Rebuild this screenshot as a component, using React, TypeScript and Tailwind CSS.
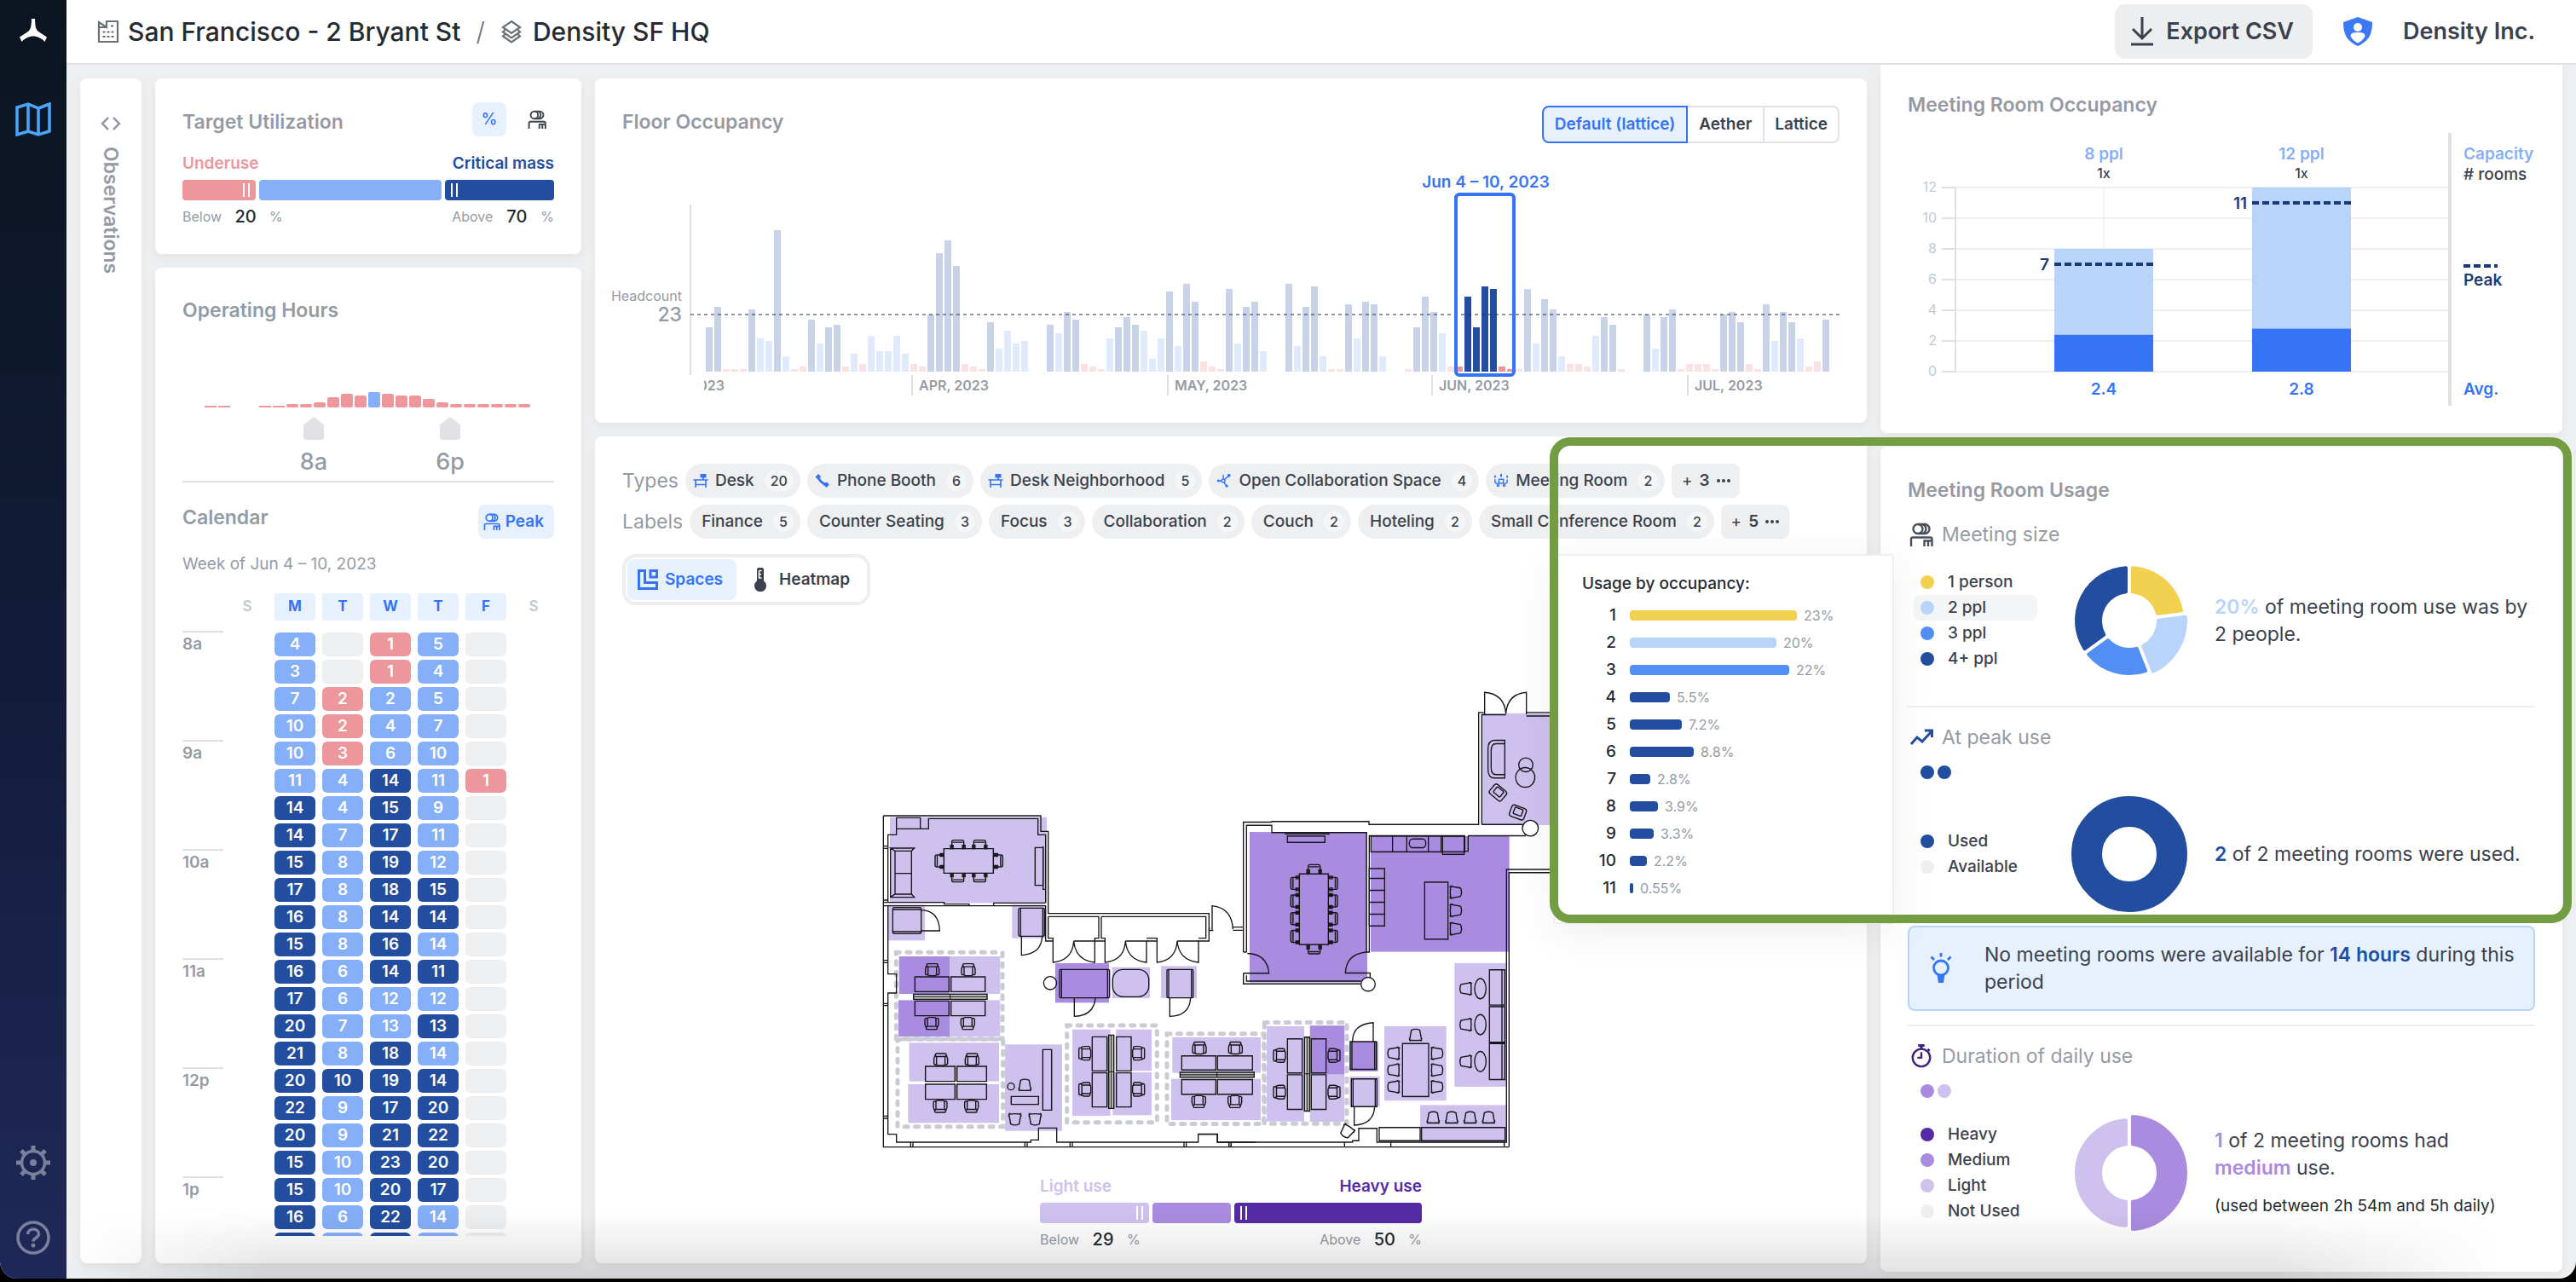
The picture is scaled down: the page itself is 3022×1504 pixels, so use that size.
import React from "react";

/* ---------- icons ---------- */

type IconProps = { className?: string };

const LogoIcon = ({ className }: IconProps) => (
  <svg viewBox="0 0 34 28" className={className} fill="currentColor" aria-hidden="true">
    <path d="M15 0h4c.2 9 1 12.500 4 15l10 6.500-2.500 5.500C27 23 22 20.500 17 20.500S7 23 3.500 27L1 21.500 11 15c3-2.500 3.800-6 4-15z" />
  </svg>
);

const MapIcon = ({ className }: IconProps) => (
  <svg viewBox="0 0 42 40" className={className} fill="none" stroke="currentColor" strokeWidth="3.500" aria-hidden="true">
    <path d="M2 6l13-4 12 5 13-5v32l-13 4-12-4-13 4zM15 2v32M27 7v31" />
  </svg>
);

const GearIcon = ({ className }: IconProps) => (
  <svg viewBox="0 0 40 40" className={className} fill="none" stroke="currentColor" aria-hidden="true">
    <circle cx="20" cy="20" r="13.500" strokeWidth="3.500" />
    <circle cx="20" cy="20" r="4" fill="currentColor" stroke="none" />
    {[0, 45, 90, 135, 180, 225, 270, 315].map((a) => (
      <path key={a} d="M20 0v6" strokeWidth="5" transform={`rotate(${a} 20 20)`} />
    ))}
  </svg>
);

const HelpIcon = ({ className }: IconProps) => (
  <svg viewBox="0 0 40 40" className={className} fill="none" stroke="currentColor" strokeWidth="3.500" aria-hidden="true">
    <circle cx="20" cy="20" r="18" />
    <path d="M13.500 16c0-8 13-8 13-.500 0 5-6.500 4.500-6.500 9" />
    <circle cx="20" cy="29" r="2.500" fill="currentColor" stroke="none" />
  </svg>
);

const BuildingIcon = ({ className }: IconProps) => (
  <svg viewBox="0 0 26 28" className={className} fill="none" stroke="currentColor" strokeWidth="2.200" aria-hidden="true">
    <path d="M2 26V3l9 6V2h13v24zM2 9h9" />
    <path d="M6.500 14.500h3M11.500 14.500h3M16.500 14.500h3M6.500 20h3M11.500 20h3M16.500 20h3M16 7.500h3" />
  </svg>
);

const LayersIcon = ({ className }: IconProps) => (
  <svg viewBox="0 0 26 28" className={className} fill="none" stroke="currentColor" strokeWidth="2.200" aria-hidden="true">
    <path d="M13 2l10 7-10 7L3 9zM5.500 12L3 14.500l10 7 10-7-2.500-2.500M5.500 17L3 19.500l10 7 10-7-2.500-2.500" />
  </svg>
);

const DownloadIcon = ({ className }: IconProps) => (
  <svg viewBox="0 0 28 36" className={className} fill="none" stroke="currentColor" strokeWidth="3" aria-hidden="true">
    <path d="M14 1v25M3 15l11 11 11-11M1 33h26" />
  </svg>
);

const ShieldIcon = ({ className }: IconProps) => (
  <svg viewBox="0 0 34 34" className={className} aria-hidden="true">
    <path d="M17 0l17 6c0 7-1 13-4 18-3 4-8 8-13 10-5-2-10-6-13-10C1 19 0 13 0 6z" fill="#3b78f6" />
    <circle cx="17" cy="12" r="5" fill="#fff" />
    <path d="M8.500 22.500c0-4 4-4.500 8.500-4.500s8.500.500 8.500 4.500c-2 4-5.500 6.500-8.500 8-3-1.500-6.500-4-8.500-8z" fill="#fff" />
  </svg>
);

const PeopleIcon = ({ className }: IconProps) => (
  <svg viewBox="0 0 28 28" className={className} fill="none" stroke="currentColor" strokeWidth="2.400" aria-hidden="true">
    <circle cx="10" cy="7.500" r="5.500" />
    <path d="M14 2a5.500 5.500 0 0 1 0 11M18 2a5.500 5.500 0 0 1 0 11M10 2h8M10 13h8" />
    <path d="M2 28v-8.500q0-2 2-2H24.500q2 0 2 2V28M17.500 28v-6.500H26M22 28v-6" />
  </svg>
);

const DeskIcon = ({ className }: IconProps) => (
  <svg viewBox="0 0 17 16" className={className} fill="none" stroke="currentColor" strokeWidth="1.600" aria-hidden="true">
    <path d="M0 7h17M2.500 7v9M14.500 7v9M2.500 12.500h12M11.500 4v3" />
    <path d="M8 0h7v4.500H8z" fill="currentColor" stroke="none" />
  </svg>
);

const PhoneIcon = ({ className }: IconProps) => (
  <svg viewBox="0 0 14 14" className={className} fill="none" stroke="currentColor" aria-hidden="true">
    <path d="M2.500 2.500q1.500 6.500 9 9" strokeWidth="2.400" />
    <path d="M1 4.500l3-3M9.500 12.500l3-3" strokeWidth="4" />
  </svg>
);

const CollabIcon = ({ className }: IconProps) => (
  <svg viewBox="0 0 18 18" className={className} fill="none" stroke="currentColor" strokeWidth="1.600" aria-hidden="true">
    <circle cx="8" cy="9" r="2.200" />
    <path d="M9.500 7.500L15.500 2M6 9H1M9 11l3 5M8 7V1M13 5l3-4" />
    <circle cx="15.500" cy="2" r="1.300" fill="currentColor" />
    <circle cx="1.500" cy="9" r="1" fill="currentColor" />
    <circle cx="12.500" cy="16" r="1" fill="currentColor" />
  </svg>
);

const MeetingIcon = ({ className }: IconProps) => (
  <svg viewBox="0 0 18 18" className={className} fill="none" stroke="currentColor" strokeWidth="1.600" aria-hidden="true">
    <path d="M9 0v4M1 2v3M17 2v3" strokeWidth="2.200" />
    <path d="M1 7v4l3 2v4M17 7v4l-3 2v4M6 7h6v10M6 7v10M6 12h6" />
  </svg>
);

const SpacesIcon = ({ className }: IconProps) => (
  <svg viewBox="0 0 24 24" className={className} fill="none" stroke="currentColor" strokeWidth="3" aria-hidden="true">
    <path d="M1.500 1.500h7V15.500h14v7h-21zM15 1.500h7.500V9H15z" />
  </svg>
);

const ThermometerIcon = ({ className }: IconProps) => (
  <svg viewBox="0 0 16 28" className={className} aria-hidden="true">
    <path d="M4 2q0-2 2-2h4q2 0 2 2v13.500a7 7 0 1 1-8 0z" fill="currentColor" />
    <path d="M6.500 3.500h3M6.500 3.500V12h3M6.500 7.800h2.500" stroke="#fff" strokeWidth="1.600" fill="none" />
  </svg>
);

const TrendIcon = ({ className }: IconProps) => (
  <svg viewBox="0 0 28 20" className={className} fill="none" stroke="currentColor" strokeWidth="3" aria-hidden="true">
    <path d="M2 18l7-8 6 5L26 3M18 2h8.500v8" />
  </svg>
);

const TimerIcon = ({ className }: IconProps) => (
  <svg viewBox="0 0 26 30" className={className} fill="none" stroke="currentColor" strokeWidth="2.600" aria-hidden="true">
    <circle cx="13" cy="17" r="11" />
    <path d="M13 10v7H8M21 6l2.500 2.500" />
    <path d="M9 1.500h8M13 1v5" strokeWidth="3.500" />
  </svg>
);

const BulbIcon = ({ className }: IconProps) => (
  <svg viewBox="0 0 26 36" className={className} fill="none" stroke="currentColor" strokeWidth="2.800" aria-hidden="true">
    <circle cx="13" cy="17.500" r="8.500" />
    <path d="M13 0v4.500M1.500 4.500L5 8M24.500 4.500L21 8" />
    <path d="M8.500 25h9L16 35h-6z" fill="currentColor" stroke="none" />
  </svg>
);

/* ---------- shared pieces ---------- */

const cardClass = "rounded-lg bg-white shadow-[0_4px_12px_rgba(0,0,0,0.05)]";
const titleClass = "text-[23px] leading-[30px] font-semibold text-[#959ba4]";

type Segment = { grow: number; color: string; handle?: "left" | "right" };

function ThresholdBar(props: {
  id: string;
  low: string;
  high: string;
  lowClass: string;
  highClass: string;
  below: string;
  above: string;
  segments: Segment[];
}) {
  const grip = (
    <span className="mx-[7px] flex h-4 gap-1">
      <span className="w-[2px] bg-white" />
      <span className="w-[2px] bg-white" />
    </span>
  );
  return (
    <div>
      <div className="flex justify-between text-[19px] leading-6 font-semibold">
        <span className={props.lowClass}>{props.low}</span>
        <span className={props.highClass}>{props.high}</span>
      </div>
      <div className="mt-[7px] flex h-6 gap-1">
        {props.segments.map((s, i) => (
          <div
            key={i}
            className={`flex items-center rounded-sm ${s.color} ${s.handle === "right" ? "justify-end" : "justify-start"}`}
            style={{ flex: `${s.grow} 1 0px` }}
          >
            {s.handle ? grip : null}
          </div>
        ))}
      </div>
      <div className="mt-[5px] flex h-7 items-center justify-between text-base text-[#959ba4]">
        <label className="flex items-center">
          Below
          <input
            id={`${props.id}-below`}
            defaultValue={props.below}
            className="mx-1 w-12 bg-transparent text-center text-xl font-medium text-[#252a33]"
          />
          %
        </label>
        <label className="flex items-center">
          Above
          <input
            id={`${props.id}-above`}
            defaultValue={props.above}
            className="mx-1 w-12 bg-transparent text-center text-xl font-medium text-[#252a33]"
          />
          %
        </label>
      </div>
    </div>
  );
}

/* ---------- sidebar and header ---------- */

function Sidebar() {
  return (
    <nav className="flex w-[78px] shrink-0 flex-col items-center bg-linear-to-b from-[#0b1520] via-[#121b38] to-[#1f2959] pt-[22px] pb-7">
      <a href="#home" aria-label="Home" className="text-white">
        <LogoIcon className="h-[28px] w-[34px]" />
      </a>
      <a href="#map" aria-label="Floor map" className="mt-[70px] text-[#4ba5fb]">
        <MapIcon className="h-10 w-[42px]" />
      </a>
      <a href="#settings" aria-label="Settings" className="mt-auto text-[#7a819c]">
        <GearIcon className="h-10 w-10" />
      </a>
      <a href="#help" aria-label="Help" className="mt-12 text-[#7a819c]">
        <HelpIcon className="h-10 w-10" />
      </a>
    </nav>
  );
}

function Header() {
  return (
    <header className="z-20 flex h-[76px] shrink-0 items-center justify-between border-b-2 border-[#e1e2e7] bg-white pr-12 pl-9">
      <nav className="flex items-center text-[30px] font-medium text-[#252a33]">
        <BuildingIcon className="mr-[10px] h-7 w-[26px] text-[#6b6f76]" />
        <a href="#building">San Francisco - 2 Bryant St</a>
        <span className="mx-[18px] font-light text-[#6b6f76]">/</span>
        <LayersIcon className="mr-3 h-7 w-[26px] text-[#6b6f76]" />
        <a href="#floor">Density SF HQ</a>
      </nav>
      <div className="flex items-center text-[27px] font-semibold text-[#3b424d]">
        <button className="flex h-16 items-center gap-[14px] rounded-xl bg-[#edeef0] pr-[22px] pl-[18px]">
          <DownloadIcon className="h-9 w-7" />
          Export CSV
        </button>
        <ShieldIcon className="ml-9 h-[34px] w-[34px]" />
        <span className="ml-9">Density Inc.</span>
      </div>
    </header>
  );
}

function ObservationsPanel() {
  return (
    <button aria-label="Expand observations" className={`${cardClass} flex w-[72px] shrink-0 flex-col items-center pt-[45px] text-[#959ba4]`}>
      <svg viewBox="0 0 24 16" className="h-4 w-6" fill="none" stroke="currentColor" strokeWidth="2.500" aria-hidden="true">
        <path d="M9 1L2 8l7 7M15 1l7 7-7 7" />
      </svg>
      <span className="mt-[19px] text-[23px] font-semibold [writing-mode:vertical-rl]">Observations</span>
    </button>
  );
}

/* ---------- target utilisation, hours, calendar ---------- */

function TargetUtilization() {
  return (
    <section className={`${cardClass} px-8 pt-7 pb-[30px]`}>
      <div className="mb-5 flex h-10 items-start justify-between pr-2">
        <h2 className={`${titleClass} mt-2`}>Target Utilization</h2>
        <div className="flex items-center gap-6">
          <button className="h-10 w-10 rounded-lg bg-[#e7f1fe] text-[19px] font-medium text-[#3474f5]">%</button>
          <button aria-label="People" className="text-[#3b424d]">
            <PeopleIcon className="h-[22px] w-[24px]" />
          </button>
        </div>
      </div>
      <ThresholdBar
        id="utilization"
        low="Underuse"
        high="Critical mass"
        lowClass="text-[#ed979c]"
        highClass="text-[#234e9f]"
        below="20"
        above="70"
        segments={[
          { grow: 86, color: "bg-[#ed979c]", handle: "right" },
          { grow: 214, color: "bg-[#85aff8]" },
          { grow: 128, color: "bg-[#234e9f]", handle: "left" },
        ]}
      />
    </section>
  );
}

const hourBars = [2, 2, 0, 0, 2, 2, 4, 4, 6, 12, 16, 14, 18, 16, 14, 14, 10, 6, 4, 4, 4, 4, 4, 4];

function OperatingHours() {
  return (
    <svg viewBox="0 0 436 185" className="block w-full" role="img" aria-label="Operating hours">
      {hourBars.map((h, i) => (
        <rect key={i} x={26 + i * 16} y={99 - h} width="14" height={h} rx={h > 2 ? 2 : 0} fill={i === 12 ? "#85aff8" : "#ed979c"} />
      ))}
      {[
        { x: 154, t: "8a" },
        { x: 314, t: "6p" },
      ].map((m) => (
        <g key={m.t}>
          <path d={`M${m.x} 110l12 9v15q0 3-3 3h-18q-3 0-3-3v-15z`} fill="#e1e2e6" />
          <text x={m.x} y="172" textAnchor="middle" className="fill-[#959ba4] text-[27px] font-medium">
            {m.t}
          </text>
        </g>
      ))}
    </svg>
  );
}

const calendarRows = [
  "4b - 1p 5b -",
  "3b - 1p 4b -",
  "7b 2p 2b 5b -",
  "10b 2p 4b 7b -",
  "10b 3p 6b 10b -",
  "11b 4b 14d 11b 1p",
  "14d 4b 15d 9b -",
  "14d 7b 17d 11b -",
  "15d 8b 19d 12b -",
  "17d 8b 18d 15d -",
  "16d 8b 14d 14d -",
  "15d 8b 16d 14b -",
  "16d 6b 14d 11d -",
  "17d 6b 12b 12b -",
  "20d 7b 13b 13d -",
  "21d 8b 18d 14b -",
  "20d 10d 19d 14d -",
  "22d 9b 17d 20d -",
  "20d 9b 21d 22d -",
  "15d 10b 23d 20d -",
  "15d 10b 20d 17d -",
  "16d 6b 22d 14b -",
  "d b d b -",
];
const hourLabels = ["8a", "9a", "10a", "11a", "12p", "1p"];
const levelClass: Record<string, string> = {
  b: "bg-[#85aff8]",
  p: "bg-[#ed979c]",
  d: "bg-[#234e9f]",
  "-": "bg-[#eeeff1]",
};

function Calendar() {
  return (
    <>
      <div className="mt-[26px] flex items-start justify-between">
        <h2 className={titleClass}>Calendar</h2>
        <button className="flex h-10 items-center gap-[6px] rounded-lg bg-[#e7f1fe] pr-3 pl-[6px] text-[19px] font-semibold text-[#3474f5]">
          <PeopleIcon className="h-5 w-5" />
          Peak
        </button>
      </div>
      <p className="mt-[18px] text-[19px] leading-6 text-[#959ba4]">Week of Jun 4 – 10, 2023</p>
      <div className="-mx-2 mt-[18px] min-h-0 flex-1 overflow-hidden">
        <table className="w-full table-fixed border-separate border-spacing-x-2 border-spacing-y-1 text-center">
          <thead>
            <tr className="text-[17px] font-bold">
              <th className="w-11 p-0" />
              {["S", "M", "T", "W", "T", "F", "S"].map((d, i) => (
                <th key={i} className="p-0 pb-[10px]">
                  <span
                    className={`flex h-8 items-center justify-center rounded-sm ${
                      i === 0 || i === 6 ? "font-semibold text-[#c5c9d0]" : "bg-[#e7f1fe] text-[#3474f5]"
                    }`}
                  >
                    {d}
                  </span>
                </th>
              ))}
            </tr>
          </thead>
          <tbody>
            {calendarRows.map((row, r) => (
              <tr key={r}>
                <th className="p-0">
                  {r % 4 === 0 && hourLabels[r / 4] ? (
                    <span className="flex h-7 w-12 items-center text-[19px] font-semibold text-[#959ba4] shadow-[0_-2px_0_#dfe1e5]">
                      {hourLabels[r / 4]}
                    </span>
                  ) : null}
                </th>
                <td className="p-0" />
                {row.split(" ").map((c, i) => (
                  <td key={i} className="p-0">
                    <span
                      className={`flex h-7 items-center justify-center rounded-md text-[19px] font-semibold text-white ${levelClass[c.slice(-1)]}`}
                    >
                      {c.slice(0, -1)}
                    </span>
                  </td>
                ))}
                <td className="p-0" />
              </tr>
            ))}
          </tbody>
        </table>
      </div>
    </>
  );
}

/* ---------- floor occupancy chart ---------- */

/* One entry per day: bar height, then d = above target, l = light, p = underused. */
const dayBars = (
  "52d 76d 3p 3p 3p 73d 39l 36l 166d 18l 3p 6p 61d 33l 52d 55d 6p 21l 9p 42l 24l 24l 42l 21l 9p 6p 67d 139d 154d 124d " +
  "9p 6p 3p 58d 27l 48l 33l 36l 0l 0l 55d 45l 70d 61d 9p 6p 3p 39l 52d 64d 55d 48l 15l 39l 94d 30l 103d 82d 12p 6p 3p " +
  "97d 33l 76d 82d 24l 0l 0l 103d 30l 76d 100d 18l 3p 3p 79d 39l 82d 79d 18l 0l 0l 3p 52d 88d 70d 45l 6p 6p 88d 52d " +
  "100d 97d 6p 3p 3p 97d 33l 85d 73d 18l 9p 9p 6p 42l 64d 55d 3p 0l 0l 67d 27l 64d 73d 3p 9p 9p 9p 3p 67d 70d 58d 9p 3p " +
  "79d 36l 70d 58d 39l 6p 12p 61d"
).split(" ");

function FloorOccupancy() {
  const fill = (kind: string, i: number) => {
    const selected = i >= 88 && i <= 94;
    if (kind === "d") return selected ? "#234e9f" : "#c8d3e7";
    if (kind === "p") return selected ? "#ed979c" : "#fae1e3";
    return "#dfebfd";
  };
  return (
    <section className={`${cardClass} px-4 pt-8 pb-4`}>
      <div className="flex h-11 items-start justify-between px-4">
        <h2 className={`${titleClass} mt-1`}>Floor Occupancy</h2>
        <div className="flex h-11 text-[19px] font-semibold text-[#3b424d]">
          <button className="rounded-l-lg border-2 border-[#3474f5] bg-[#e7f1fe] px-[13px] text-[#3474f5]">Default (lattice)</button>
          <button className="border-y-2 border-[#e1e2e7] px-[13px]">Aether</button>
          <button className="rounded-r-lg border-2 border-[#e1e2e7] px-3">Lattice</button>
        </div>
      </div>
      <svg viewBox="0 0 1460 284" className="mt-7 block w-full" role="img" aria-label="Headcount by day">
        <path d="M96 44V244" stroke="#dfe1e5" strokeWidth="2" />
        {dayBars.map((b, i) => {
          const h = Number(b.slice(0, -1));
          return <rect key={i} x={114 + i * 10} y={240 - h} width="8" height={h} fill={fill(b.slice(-1), i)} />;
        })}
        <path d="M96 173H1444" stroke="#1d2f55" strokeOpacity="0.5" strokeWidth="2" strokeDasharray="4 4" />
        <text x="86" y="157" textAnchor="end" className="fill-[#959ba4] text-[16px]">
          Headcount
        </text>
        <text x="86" y="181" textAnchor="end" className="fill-[#959ba4] text-[23px] font-medium">
          23
        </text>
        <svg x="112" y="244" width="60" height="24">
          <text x="24" y="18" textAnchor="end" className="fill-[#959ba4] text-[16px] font-semibold">
            MAR, 2023
          </text>
        </svg>
        {[
          { x: 356, t: "APR, 2023" },
          { x: 656, t: "MAY, 2023" },
          { x: 966, t: "JUN, 2023" },
          { x: 1266, t: "JUL, 2023" },
        ].map((m) => (
          <g key={m.t}>
            <path d={`M${m.x} 244v24`} stroke="#dfe1e5" strokeWidth="2" />
            <text x={m.x + 8} y="262" className="fill-[#959ba4] text-[16px] font-semibold">
              {m.t}
            </text>
          </g>
        ))}
        <rect x="994" y="32" width="68" height="212" rx="4" fill="none" stroke="#3474f5" strokeWidth="4" />
        <text x="1029" y="24" textAnchor="middle" className="fill-[#3474f5] text-[19px] font-semibold">
          Jun 4 – 10, 2023
        </text>
      </svg>
    </section>
  );
}

/* ---------- floor plan ---------- */

const LIGHT = "#cfc1ed";
const MEDIUM = "#a98cdf";

type Box = [number, number, number, number];
type Seat = [number, number, number];

const Boxes = ({ items, fill = "none", stroke }: { items: Box[]; fill?: string; stroke?: string }) => (
  <>
    {items.map(([x1, y1, x2, y2], i) => (
      <rect key={i} x={x1} y={y1} width={x2 - x1} height={y2 - y1} fill={fill} stroke={stroke} vectorEffect="non-scaling-stroke" />
    ))}
  </>
);

const deskChair = "M-6.500-5.500q0-1.500 1.500-1.500H5q1.500 0 1.500 1.500T5-3.500H-5q-1.500 0-1.500-2zM-5-3.500H5V5q0 2-2 2h-6q-2 0-2-2zM-5-4h-2l-1 3v6l1 1h2M5-4h2l1 3v6l-1 1H5";
const diningChair = "M-7 5v-8q0-2 2-2H5q2 0 2 2v8M-6-2.500H6M-8.500 1h3v4h-3zM5.500 1h3v4h-3z";
const loungeChair = "M-5-6q5-2.500 10 0l2 11.500q-7 1-14 0zM-7.500 3l1.500 4M7.500 3L6 7";
const armchair = "M-6-7h12q3 0 3 3v8q0 3-3 3H-6q-3 0-3-3v-8q0-3 3-3zM-4-5h8q1 0 1 1v6q0 1-1 1h-8q-1 0-1-1v-6q0-1 1-1z";

const Seats = ({ shape, items }: { shape: string; items: Seat[] }) => (
  <>
    {items.map(([x, y, r], i) => (
      <path key={i} d={shape} transform={`translate(${x} ${y}) rotate(${r})`} />
    ))}
  </>
);

/* West and east wings use their own drawing units; these map seats to plan units. */
const west = (list: Seat[]): Seat[] => list.map(([x, y, r]) => [1000 + x / 3, 920 + y / 3, r]);
const east = (list: Seat[]): Seat[] => list.map(([x, y, r]) => [1420 + x / 3, 790 + y / 2.7034, r]);

function FloorPlan() {
  return (
    <svg viewBox="1030 806 828 544" className="block w-full max-w-[828px]" fill="none" stroke="#15151a" strokeWidth="1.400" role="img" aria-label="Floor plan">
      <g transform="translate(1000 920) scale(0.33333)" stroke="none">
        <Boxes
          fill={LIGHT}
          items={[
            [132, 116, 684, 418], [124, 424, 255, 550], [562, 424, 680, 542], [342, 606, 520, 738], [342, 760, 520, 888],
            [200, 910, 516, 1046], [196, 1056, 516, 1192], [537, 916, 738, 1220], [914, 644, 1047, 753], [1086, 640, 1212, 753],
            [774, 863, 908, 1167], [928, 863, 1053, 1009], [916, 1014, 1053, 1165],
          ]}
        />
        <Boxes fill={MEDIUM} items={[[164, 606, 342, 738], [162, 760, 342, 888], [714, 630, 903, 769]]} />
      </g>
      <g transform="translate(1420 790) scale(0.33333 0.3699)" stroke="none">
        <Boxes
          fill={LIGHT}
          items={[
            [955, 127, 1310, 481], [859, 919, 1043, 1311], [612, 1119, 830, 1355], [738, 1369, 1043, 1490], [490, 1278, 596, 1373],
            [198, 1119, 330, 1421], [350, 1272, 472, 1422], [-134, 1154, 177, 1267], [-138, 1286, 177, 1417],
          ]}
        />
        <Boxes fill={MEDIUM} items={[[138, 503, 552, 980], [564, 516, 1052, 883], [490, 1168, 590, 1262], [350, 1117, 472, 1272]]} />
      </g>
      <g stroke="#c9ccd5" strokeWidth="5" strokeDasharray="4 8.500" strokeLinecap="round">
        <g transform="translate(1000 920) scale(0.33333)">
          <Boxes items={[[154, 592, 528, 896], [159, 898, 530, 1205], [755, 849, 1072, 1190]]} />
        </g>
        <g transform="translate(1420 790) scale(0.33333 0.3699)">
          <Boxes items={[[-153, 1143, 188, 1429], [190, 1107, 480, 1428]]} />
        </g>
      </g>

      {/* west wing */}
      <g transform="translate(1000 920) scale(0.33333)">
        <g strokeWidth="4">
          <path d="M109 111H663V166H689V455H1255V552H1218M109 111V1277H2311" />
          <path d="M125 416V178H155V118H239V157M155 157H268V121H653V178H680V416M109 416H323V422H411V428H497V418H680M109 428H680V552H706M853 552H889M1035 552H1072" />
          <path d="M125 428V668H155V735H125V1232H155V1260H628V1252H655V1210H719V1260H1217V1232H1284V1260H1420" />
          <path d="M205 1260v17M213 1260v17M607 1260v17M615 1260v17M766 1260v17M774 1260v17M1167 1260v17M1175 1260v17M1325 1260v17M1333 1260v17" />
          <path d="M109 218h16M109 226h16M109 408h16M109 620h16M109 628h16M109 772h16M109 779h16M109 1168h16M109 1176h16" />
          <path d="M689 466H867V542H853V552M689 466V542H706V552M876 466H1244V542H1218M876 466V542H889V552M1035 542H1072V552" />
          <path d="M706 552V627Q775 620 779 552Q785 620 853 627V552H779M889 552V627Q957 620 961 552Q967 620 1035 627V552H961M1072 552V627Q1139 620 1143 552Q1149 620 1218 627V552H1143" />
          <path d="M1266 515V428Q1335 435 1339 510M1256 503V515H1270M1339 503H1377M1339 514H1377" />
          <path d="M242 443Q305 445 307 516H242M595 535V602Q665 598 668 535M781 752V817Q850 815 855 752M1117 752V817Q1187 815 1190 752" />
          <path d="M134 225H218L208 235H150zM134 225V398H218L208 387H150L134 398M150 235V387M208 235V387M150 314H208M671 218V370H680" />
          <rect x="142" y="434" width="100" height="92" rx="6" />
          <rect x="585" y="436" width="91" height="99" rx="6" />
          <rect x="729" y="652" width="176" height="100" rx="4" />
          <path d="M736 652V752M898 652V752M1113 652V752M1193 652V752M592 436V535M670 436V535M142 441H242M142 519H242" />
          <rect x="916" y="652" width="127" height="96" rx="36" />
          <rect x="1107" y="652" width="92" height="100" rx="4" />
          <circle cx="696" cy="700" r="23" />
          <circle cx="558" cy="1064" r="12" />
        </g>
        <Boxes
          stroke="#15151a"
          items={[
            [322, 227, 496, 313], [643, 223, 671, 356], [220, 678, 340, 730], [347, 678, 467, 730], [220, 763, 340, 815], [347, 763, 467, 815],
            [257, 993, 361, 1046], [368, 993, 472, 1046], [257, 1056, 361, 1109], [368, 1056, 472, 1109],
            [559, 1099, 655, 1127], [670, 934, 701, 1147], [844, 889, 896, 1009], [844, 1016, 896, 1136], [929, 889, 981, 1009], [929, 1016, 981, 1136],
          ]}
        />
        <Boxes fill="#c4c6c2" stroke="#15151a" items={[[215, 739, 474, 757], [902, 883, 920, 1141]]} />
        <path d="M911 883V1141M902 1012H920M215 748H474M344 739V757" strokeWidth="3" />
      </g>
      <Seats shape={diningChair} items={west([[371, 212, 0], [448, 212, 0], [371, 329, 180], [448, 329, 180], [306, 270, -90], [514, 270, 90]])} />
      <Seats
        shape={deskChair}
        items={west([
          [281, 653, 0], [408, 653, 0], [279, 842, 180], [406, 842, 180], [311, 969, 0], [421, 969, 0], [309, 1134, 180], [419, 1134, 180],
          [818, 947, -90], [818, 1074, -90], [1007, 947, 90], [1007, 1074, 90],
        ])}
      />
      <Seats shape={loungeChair} items={west([[607, 1060, 0], [572, 1178, 180], [643, 1178, 180]])} />

      {/* east wing */}
      <g transform="translate(1420 790) scale(0.33333 0.3699)">
        <g strokeWidth="4">
          <path d="M116 884V472H214L216 470H558V479H944V124H962M127 884V482H216V505H549V884H559V515H896M116 884H127" />
          <path d="M955 479V131H1040M955 479H1100M906 515H1110M1112 124H1310M1112 135H1310" />
          <path d="M965 130V60Q1035 65 1040 128Q1045 65 1112 60V130M262 509H420" />
          <path d="M1310 622H1042V1487H586V1443H522V1482H500V1487H25V1461H-43M1310 632H1051V1502M635 1487v15M65 1487v15M73 1487v15M472 1487v15M1034 1487v15" />
          <path d="M116 951H206Q200 890 130 888M116 951V985H530M127 958V976H530M549 884Q478 890 475 950H562V968" />
          <rect x="565" y="516" width="330" height="50" />
          <path d="M641 516V566M691 516V566M767 516V566M812 516V566M907 516V564H895V516" />
          <rect x="700" y="525" width="58" height="28" rx="12" />
          <rect x="817" y="516" width="76" height="58" />
          <rect x="559" y="619" width="54" height="182" />
          <path d="M559 650H613M559 688H613M559 726H613M559 764H613" />
          <rect x="754" y="662" width="82" height="181" />
          <rect x="313" y="636" width="102" height="224" />
          <rect x="271" y="516" width="132" height="20" />
          <path d="M1036 212H1000Q977 212 977 240V305Q977 332 1000 332H1036zM1034 223H1005Q988 223 988 245V300Q988 321 1005 321H1034" />
          <ellipse cx="1110" cy="290" rx="25" ry="22" />
          <ellipse cx="1108" cy="330" rx="34" ry="31" />
          <ellipse cx="1126" cy="491" rx="28" ry="25" fill="#fff" />
          <ellipse cx="555" cy="986" rx="25" ry="22" fill="#fff" />
          <path d="M982 940H1036V1052H982zM982 1057H1036V1170H982zM982 1174H1036V1288H982zM1026 940V1288" />
          <ellipse cx="950" cy="1000" rx="20" ry="32" />
          <ellipse cx="950" cy="1114" rx="20" ry="32" />
          <ellipse cx="950" cy="1231" rx="20" ry="32" />
          <rect x="676" y="1174" width="92" height="168" />
          <path d="M492 1168H584V1256H492zM498 1168V1256M578 1168V1256M500 1168Q500 1112 573 1108V1168" />
          <path d="M496 1286H586V1374H496zM502 1286V1374M580 1286V1374M506 1374V1433Q575 1430 578 1374" />
          <path d="M594 1440H738V1482H594zM743 1440H1037V1482H743z" />
          <path d="M271 1159H323V1267H271zM271 1273H323V1383H271zM355 1159H407V1267H355zM355 1273H407V1383H355z" />
          <path d="M-101 1213H19V1258H-101zM25 1213H148V1258H25zM-101 1288H19V1335H-101zM25 1288H148V1335H25z" />
        </g>
        <path d="M331 1154H349V1388H331zM-107 1265H154V1281H-107z" fill="#c4c6c2" strokeWidth="4" />
        <path d="M340 1154V1388M331 1270H349M-107 1273H154M23 1265V1281" strokeWidth="3" />
      </g>
      <Seats
        shape={diningChair}
        items={east([
          [298, 666, -90], [298, 722, -90], [298, 778, -90], [298, 834, -90], [432, 666, 90], [432, 722, 90], [432, 778, 90], [432, 834, 90],
          [365, 620, 0], [365, 876, 180],
        ])}
      />
      <Seats
        shape={deskChair}
        items={east([[243, 1212, -90], [243, 1328, -90], [435, 1212, 90], [435, 1328, 90], [-39, 1188, 0], [88, 1188, 0], [-41, 1358, 180], [86, 1358, 180]])}
      />
      <Seats
        shape={loungeChair}
        items={east([
          [862, 694, 90], [862, 752, 90], [862, 810, 90], [900, 1000, -90], [900, 1114, -90], [900, 1231, -90], [722, 1148, 0], [646, 1205, -90],
          [646, 1258, -90], [646, 1311, -90], [796, 1205, 90], [796, 1258, 90], [796, 1311, 90], [784, 1410, 0], [849, 1410, 0], [914, 1410, 0],
          [979, 1410, 0], [481, 1452, 215],
        ])}
      />
      <Seats shape={armchair} items={east([[1012, 378, 40], [1082, 441, 20]])} />
    </svg>
  );
}

const typeChips = [
  { Icon: DeskIcon, label: "Desk", count: 20 },
  { Icon: PhoneIcon, label: "Phone Booth", count: 6 },
  { Icon: DeskIcon, label: "Desk Neighborhood", count: 5 },
  { Icon: CollabIcon, label: "Open Collaboration Space", count: 4 },
  { Icon: MeetingIcon, label: "Meeting Room", count: 2 },
];
const labelChips = [
  { label: "Finance", count: 5 },
  { label: "Counter Seating", count: 3 },
  { label: "Focus", count: 3 },
  { label: "Collaboration", count: 2 },
  { label: "Couch", count: 2 },
  { label: "Hoteling", count: 2 },
  { label: "Small Conference Room", count: 2 },
];

const Count = ({ n }: { n: number }) => (
  <span className="ml-3 flex h-6 min-w-6 items-center justify-center rounded-full bg-[#f5f6f8] px-[7px] text-base font-medium">{n}</span>
);

const MoreButton = ({ n }: { n: number }) => (
  <button className="flex h-10 w-20 items-center justify-center gap-2 rounded-lg bg-[#eeeff1] text-[19px] font-semibold">
    <span className="font-normal">+</span>
    {n}
    <span className="flex gap-[2px]">
      <span className="h-1 w-1 rounded-full bg-[#3b424d]" />
      <span className="h-1 w-1 rounded-full bg-[#3b424d]" />
      <span className="h-1 w-1 rounded-full bg-[#3b424d]" />
    </span>
  </button>
);

function FloorPanel() {
  return (
    <section className={`${cardClass} flex-1 px-8 pt-8 pb-[14px]`}>
      <div className="flex flex-col gap-2 text-[19px] font-medium whitespace-nowrap text-[#3b424d]">
        <div className="flex items-center gap-2">
          <span className="text-[23px] font-normal text-[#959ba4]">Types</span>
          {typeChips.map(({ Icon, label, count }) => (
            <button key={label} className="flex h-10 items-center rounded-full bg-[#eeeff1] pr-2 pl-[9px]">
              <Icon className="mr-2 h-4 w-[18px] text-[#3474f5]" />
              {label}
              <Count n={count} />
            </button>
          ))}
          <MoreButton n={3} />
        </div>
        <div className="flex items-center gap-2">
          <span className="text-[23px] font-normal text-[#959ba4]">Labels</span>
          {labelChips.map(({ label, count }) => (
            <button key={label} className="flex h-10 items-center rounded-full bg-[#eeeff1] pr-2 pl-[14px]">
              {label}
              <Count n={count} />
            </button>
          ))}
          <MoreButton n={5} />
        </div>
      </div>
      <div className="mt-[18px] inline-flex h-[60px] rounded-2xl border-4 border-[#eeeff1] p-[2px] text-[19px] font-semibold">
        <button className="flex h-12 items-center gap-2 rounded-lg bg-[#e7f1fe] px-3 pr-4 text-[#3474f5]">
          <SpacesIcon className="h-6 w-6" />
          Spaces
        </button>
        <button className="flex h-12 items-center gap-[14px] pr-[18px] pl-5 text-[#3b424d]">
          <ThermometerIcon className="h-7 w-4" />
          Heatmap
        </button>
      </div>
      <div className="mt-24 flex justify-center">
        <FloorPlan />
      </div>
      <div className="mx-auto mt-[30px] w-[448px]">
        <ThresholdBar
          id="use"
          low="Light use"
          high="Heavy use"
          lowClass="text-[#cfc1ed]"
          highClass="text-[#552ba5]"
          below="29"
          above="50"
          segments={[
            { grow: 128, color: "bg-[#cfc1ed]", handle: "right" },
            { grow: 92, color: "bg-[#a98cdf]" },
            { grow: 220, color: "bg-[#552ba5]", handle: "left" },
          ]}
        />
      </div>
    </section>
  );
}

/* ---------- meeting rooms ---------- */

function RoomOccupancy() {
  const y = (v: number) => 288 - v * 18;
  const rooms = [
    { x: 172, cap: 8, avg: 2.4, peak: 7 },
    { x: 404, cap: 12, avg: 2.8, peak: 11 },
  ];
  return (
    <section className="rounded-b-lg bg-white px-8 pt-8 pb-7 shadow-[0_4px_12px_rgba(0,0,0,0.05)]">
      <h2 className={titleClass}>Meeting Room Occupancy</h2>
      <svg viewBox="0 0 736 332" className="mt-[10px] block w-full" role="img" aria-label="Meeting room occupancy">
        <path d="M230 72V144" stroke="#f2f3f5" strokeWidth="2" />
        {[0, 2, 4, 6, 8, 10, 12].map((v) => (
          <g key={v}>
            <path d={`M56 ${y(v)}H634`} stroke="#eeeff1" strokeWidth="2" />
            <path d={`M40 ${y(v)}H56`} stroke="#dfe1e5" strokeWidth="2" />
            <text x="34" y={y(v) + 5} textAnchor="end" className="fill-[#c5c9d0] text-[16px]">
              {v}
            </text>
          </g>
        ))}
        <path d="M56 72V288" stroke="#dfe1e5" strokeWidth="2" />
        {rooms.map((r) => (
          <g key={r.cap}>
            <rect x={r.x} y={y(r.cap)} width="116" height={r.cap * 18} fill="#b9d4fa" />
            <rect x={r.x} y={y(r.avg)} width="116" height={r.avg * 18} fill="#3474f5" />
            <path d={`M${r.x} ${y(r.peak)}h116`} stroke="#1c3a77" strokeWidth="4" strokeDasharray="8 4" />
            <text x={r.x - 6} y={y(r.peak) + 7} textAnchor="end" className="fill-[#1c3a77] text-[19px] font-semibold">
              {r.peak}
            </text>
            <text x={r.x + 58} y="39" textAnchor="middle" className="fill-[#85aff8] text-[19px] font-semibold">
              {r.cap} ppl
            </text>
            <text x={r.x + 58} y="61" textAnchor="middle" className="fill-[#3b424d] text-[16px] font-medium">
              1x
            </text>
            <text x={r.x + 58} y="315" textAnchor="middle" className="fill-[#3474f5] text-[19px] font-semibold">
              {r.avg}
            </text>
          </g>
        ))}
        <path d="M636 8V328" stroke="#dfe1e7" strokeWidth="4" />
        <text x="652" y="39" className="fill-[#85aff8] text-[19px] font-semibold">
          Capacity
        </text>
        <text x="652" y="63" className="fill-[#3b424d] text-[19px] font-medium">
          # rooms
        </text>
        <path d="M652 164h40" stroke="#1c3a77" strokeWidth="4" strokeDasharray="8 4" />
        <text x="652" y="187" className="fill-[#1c3a77] text-[19px] font-semibold">
          Peak
        </text>
        <text x="652" y="315" className="fill-[#3474f5] text-[19px] font-semibold">
          Avg.
        </text>
      </svg>
    </section>
  );
}

type Slice = { share: number; color: string; raised?: boolean };

function Donut({ slices }: { slices: Slice[] }) {
  const point = (a: number, r: number) => `${68 + r * Math.sin(a)} ${68 - r * Math.cos(a)}`;
  if (slices.length === 1) {
    return (
      <svg viewBox="0 0 136 136" className="h-[136px] w-[136px] shrink-0" aria-hidden="true">
        <circle cx="68" cy="68" r="50" fill="none" stroke={slices[0].color} strokeWidth="36" />
      </svg>
    );
  }
  let start = 0;
  return (
    <svg viewBox="0 0 136 136" className="h-[136px] w-[136px] shrink-0" aria-hidden="true">
      {slices.map((s, i) => {
        const from = start * 2 * Math.PI;
        start += s.share;
        const to = start * 2 * Math.PI;
        const ro = s.raised ? 66 : 62;
        const ri = 34;
        const go = 4 / ro;
        const gi = 4 / ri;
        const large = s.share > 0.5 ? 1 : 0;
        return (
          <path
            key={i}
            d={`M${point(from + go, ro)}A${ro} ${ro} 0 ${large} 1 ${point(to - go, ro)}L${point(to - gi, ri)}A${ri} ${ri} 0 ${large} 0 ${point(from + gi, ri)}Z`}
            fill={s.color}
            stroke={s.color}
            strokeWidth="4"
            strokeLinejoin="round"
          />
        );
      })}
    </svg>
  );
}

function Legend({ items }: { items: { dot: string; label: string; active?: boolean }[] }) {
  return (
    <ul className="mr-10 ml-[7px] w-[145px] shrink-0 text-[19px] font-medium text-[#3b424d]">
      {items.map((it) => (
        <li key={it.label} className={`flex h-[30px] items-center gap-4 rounded-lg pl-2 ${it.active ? "bg-[#f4f5f7]" : ""}`}>
          <span className={`h-4 w-4 rounded-full ${it.dot}`} />
          {it.label}
        </li>
      ))}
    </ul>
  );
}

const sectionTitle = "flex h-[30px] items-center gap-[10px] pl-[2px] text-[23px] text-[#959ba4]";
const bodyText = "ml-8 text-[23px] leading-8 text-[#3b424d]";

const occupancyRows = [
  { n: 1, pct: "23%", w: 196, color: "bg-[#f3d150]" },
  { n: 2, pct: "20%", w: 172, color: "bg-[#b9d4fa]" },
  { n: 3, pct: "22%", w: 187, color: "bg-[#528ff5]" },
  { n: 4, pct: "5.5%", w: 47, color: "bg-[#234e9f]" },
  { n: 5, pct: "7.2%", w: 61, color: "bg-[#234e9f]" },
  { n: 6, pct: "8.8%", w: 75, color: "bg-[#234e9f]" },
  { n: 7, pct: "2.8%", w: 24, color: "bg-[#234e9f]" },
  { n: 8, pct: "3.9%", w: 33, color: "bg-[#234e9f]" },
  { n: 9, pct: "3.3%", w: 28, color: "bg-[#234e9f]" },
  { n: 10, pct: "2.2%", w: 20, color: "bg-[#234e9f]" },
  { n: 11, pct: "0.55%", w: 4, color: "bg-[#234e9f]" },
];

function OccupancyPopover() {
  return (
    <div
      role="tooltip"
      className="absolute top-[126px] right-[784px] w-[400px] rounded-sm border-2 border-[#eeeff1] bg-white pt-[21px] pb-6 pl-[32px] shadow-[0_10px_50px_rgba(0,0,0,0.07)]"
    >
      <p className="text-[19px] leading-6 font-medium text-[#252a33]">Usage by occupancy:</p>
      <ul className="mt-[9px]">
        {occupancyRows.map((r) => (
          <li key={r.n} className="flex h-8 items-center">
            <span className="w-10 text-right text-[19px] font-medium text-[#252a33]">{r.n}</span>
            <span className={`mr-2 ml-4 h-3 rounded-sm ${r.color}`} style={{ width: r.w }} />
            <span className="text-base text-[#959ba4]">{r.pct}</span>
          </li>
        ))}
      </ul>
    </div>
  );
}

function RoomUsage() {
  return (
    <section className={`${cardClass} relative flex-1 px-8 pt-9 pb-12`}>
      <h2 className={titleClass}>Meeting Room Usage</h2>
      <h3 className={`${sectionTitle} mt-[22px]`}>
        <PeopleIcon className="h-7 w-7 text-[#4a505a]" />
        Meeting size
      </h3>
      <div className="mt-[18px] flex items-center">
        <Legend
          items={[
            { dot: "bg-[#f3d150]", label: "1 person" },
            { dot: "bg-[#b9d4fa]", label: "2 ppl", active: true },
            { dot: "bg-[#528ff5]", label: "3 ppl" },
            { dot: "bg-[#234e9f]", label: "4+ ppl" },
          ]}
        />
        <Donut
          slices={[
            { share: 0.23, color: "#f3d150" },
            { share: 0.21, color: "#b9d4fa", raised: true },
            { share: 0.21, color: "#528ff5" },
            { share: 0.35, color: "#234e9f" },
          ]}
        />
        <p className={bodyText}>
          <b className="font-semibold text-[#b9d4fa]">20%</b> of meeting room use was by
          <br />2 people.
        </p>
      </div>
      <hr className="mt-8 border-t-2 border-[#eeeff1]" />
      <h3 className={`${sectionTitle} mt-5`}>
        <TrendIcon className="h-5 w-7 text-[#234e9f]" />
        At peak use
      </h3>
      <div className="mt-[18px] flex gap-1 pl-[15px]">
        <span className="h-4 w-4 rounded-full bg-[#234e9f]" />
        <span className="h-4 w-4 rounded-full bg-[#234e9f]" />
      </div>
      <div className="mt-5 flex items-center">
        <Legend
          items={[
            { dot: "bg-[#234e9f]", label: "Used" },
            { dot: "bg-[#eeeff1]", label: "Available" },
          ]}
        />
        <Donut slices={[{ share: 1, color: "#234e9f" }]} />
        <p className={bodyText}>
          <b className="font-semibold text-[#234e9f]">2</b> of 2 meeting rooms were used.
        </p>
      </div>
      <div className="mt-4 flex items-center rounded-lg border-2 border-[#b9d4fa] bg-[#e7f1fe] py-4 pr-2 pl-6">
        <BulbIcon className="h-9 w-[26px] shrink-0 text-[#3474f5]" />
        <p className="ml-[38px] text-[23px] leading-8 text-[#3b424d]">
          No meeting rooms were available for <b className="font-semibold text-[#234e9f]">14 hours</b> during this
          <br />
          period
        </p>
      </div>
      <hr className="mt-4 border-t-2 border-[#eeeff1]" />
      <h3 className={`${sectionTitle} mt-5`}>
        <TimerIcon className="h-7 w-7 text-[#43217f]" />
        Duration of daily use
      </h3>
      <div className="mt-[18px] flex gap-1 pl-[15px]">
        <span className="h-4 w-4 rounded-full bg-[#a98cdf]" />
        <span className="h-4 w-4 rounded-full bg-[#cfc1ed]" />
      </div>
      <div className="mt-5 flex items-center">
        <Legend
          items={[
            { dot: "bg-[#552ba5]", label: "Heavy" },
            { dot: "bg-[#a98cdf]", label: "Medium" },
            { dot: "bg-[#cfc1ed]", label: "Light" },
            { dot: "bg-[#eeeff1]", label: "Not Used" },
          ]}
        />
        <Donut
          slices={[
            { share: 0.5, color: "#a98cdf", raised: true },
            { share: 0.5, color: "#cfc1ed" },
          ]}
        />
        <div className={bodyText}>
          <p>
            <b className="font-semibold text-[#a98cdf]">1</b> of 2 meeting rooms had
            <br />
            <b className="font-semibold text-[#a98cdf]">medium</b> use.
          </p>
          <p className="mt-[14px] text-[19px] leading-[30px] text-[#252a33]">(used between 2h 54m and 5h daily)</p>
        </div>
      </div>
      <OccupancyPopover />
      <div className="pointer-events-none absolute -top-[11px] -right-[11px] -left-[388px] h-[570px] rounded-3xl border-10 border-[#739c43]" />
    </section>
  );
}

/* ---------- page ---------- */

export default function App() {
  return (
    <div className="h-screen overflow-hidden bg-black pb-1 font-['Inter',sans-serif]">
      <div className="relative flex h-full overflow-hidden rounded-b-[20px] bg-[#eeeff1]">
        <Sidebar />
        <div className="flex min-w-0 flex-1 flex-col">
          <Header />
          <main className="flex min-h-0 flex-1 gap-4 px-4">
            <div className="flex min-w-0 flex-1 gap-4 pt-4 pb-[18px]">
              <ObservationsPanel />
              <div className="flex w-[500px] shrink-0 flex-col gap-4">
                <TargetUtilization />
                <section className={`${cardClass} flex min-h-0 flex-1 flex-col px-8 pt-[35px] pb-8`}>
                  <h2 className={titleClass}>Operating Hours</h2>
                  <div className="border-b-2 border-[#dfe1e5]">
                    <OperatingHours />
                  </div>
                  <Calendar />
                </section>
              </div>
              <div className="flex min-w-0 flex-1 flex-col gap-4">
                <FloorOccupancy />
                <FloorPanel />
              </div>
            </div>
            <div className="flex w-[800px] shrink-0 flex-col gap-4 pb-2">
              <RoomOccupancy />
              <RoomUsage />
            </div>
          </main>
        </div>
        <div className="pointer-events-none absolute inset-x-0 bottom-0 left-[78px] h-20 bg-linear-to-t from-black/12 to-transparent [mask-image:linear-gradient(to_right,transparent,black_8%,black_88%,transparent_97%)]" />
      </div>
    </div>
  );
}
